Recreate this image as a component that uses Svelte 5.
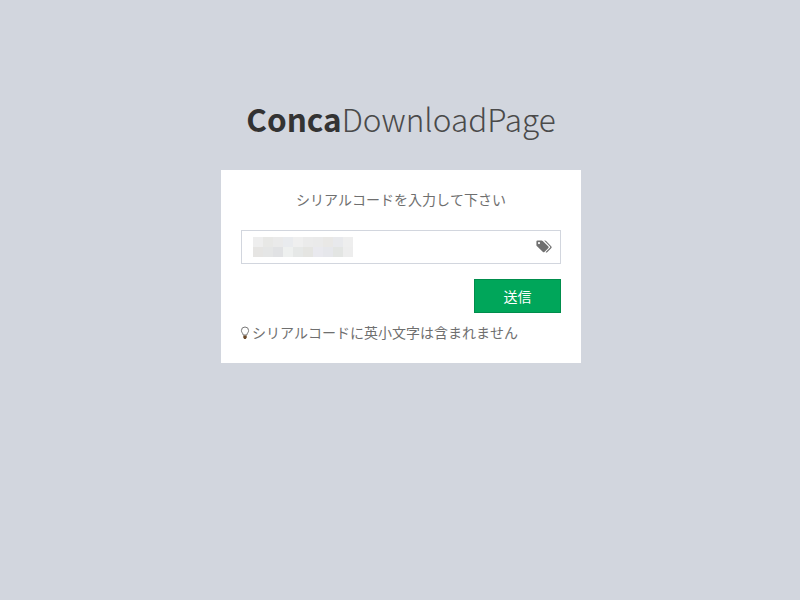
<script>
  const cells = [
    "#eeeeee", "#e8e8e6", "#eaeaea", "#e9ebee", "#efefef", "#ebebeb", "#eaeaea", "#e9e8e6", "#e8e9ec", "#eeeeee",
    "#e6e5e3", "#e5e6e6", "#e1e2e4", "#eef0ef", "#e6e8e7", "#e5e5e2", "#e9e9ee", "#e6e7eb", "#e3e5e3", "#ededed"
  ];
</script>

<div class="page">
  <h1 class="title"><b>Conca</b>DownloadPage</h1>

  <form class="card" onsubmit={(e) => e.preventDefault()}>
    <p class="lead">シリアルコードを入力して下さい</p>

    <div class="field">
      <div class="masked">
        {#each cells as c}
          <span style="background: {c}"></span>
        {/each}
      </div>
      <svg class="tag" viewBox="0 0 16 14" aria-hidden="true">
        <path d="M0.4 1.6 Q0.4 0.4 1.6 0.4 H5.6 Q6.2 0.4 6.7 0.9 L12.4 6.6 Q13 7.3 12.4 8 L8.4 12 Q7.7 12.6 7 12 L1 6.3 Q0.4 5.8 0.4 5.2 Z M3 2 A1.1 1.1 0 1 0 3 4.2 A1.1 1.1 0 1 0 3 2 Z" fill="#707070" fill-rule="evenodd"/>
        <path d="M8.2 0.4 H9 Q9.6 0.4 10.1 0.9 L15.4 6.4 Q16 7.2 15.4 8 L11.2 12.2 Q10.6 12.8 10 12.4 L9.7 12.1 L14 7.8 Q14.6 7.2 14 6.6 Z" fill="#707070"/>
      </svg>
    </div>

    <div class="actions">
      <button type="submit">送信</button>
    </div>

    <p class="hint">
      <svg class="bulb" viewBox="0 0 10 14" aria-hidden="true">
        <path d="M5 1 A3.6 3.6 0 0 0 1.4 4.6 C1.4 6.4 3 7.2 3.2 9 H6.8 C7 7.2 8.6 6.4 8.6 4.6 A3.6 3.6 0 0 0 5 1 Z" fill="none" stroke="#777" stroke-width="1"/>
        <path d="M3.3 9.6 H6.7 V11.6 L5.8 13 H4.2 L3.3 11.6 Z" fill="#6b4a2a"/>
      </svg>シリアルコードに英小文字は含まれません
    </p>
  </form>
</div>

<style>
  :global(body) {
    margin: 0;
    background: #d2d6de;
    font-family: "Noto Sans CJK JP", "Noto Sans", sans-serif;
    font-kerning: none;
    color: #6f6f6f;
  }

  .page {
    display: flex;
    flex-direction: column;
    align-items: center;
    height: 600px;
    padding: 100px 0 0 2px;
    box-sizing: border-box;
  }

  .title {
    margin: 0 0 25px;
    height: 45px;
    line-height: 36px;
    font-size: 31.5px;
    font-weight: 200;
    color: #4a4a4a;
    white-space: nowrap;
    font-kerning: normal;
  }

  .title b {
    font-weight: 700;
    color: #333;
  }

  .card {
    width: 360px;
    box-sizing: border-box;
    padding: 20px;
    background: #fff;
  }

  .lead {
    margin: 0 0 20px;
    height: 20px;
    line-height: 18px;
    font-size: 14px;
    text-align: center;
  }

  .field {
    display: flex;
    align-items: center;
    justify-content: space-between;
    height: 34px;
    box-sizing: border-box;
    padding: 0 8px 0 11px;
    border: 1px solid #d2d6de;
  }

  .masked {
    display: grid;
    grid-template-columns: repeat(10, 10px);
    grid-auto-rows: 10px;
  }

  .tag {
    width: 16px;
    height: 14px;
  }

  .actions {
    display: flex;
    justify-content: flex-end;
    margin-top: 15px;
  }

  button {
    width: 87px;
    height: 34px;
    padding: 0;
    border: 1px solid #008d4c;
    border-radius: 0;
    background: #00a65a;
    color: #fff;
    font: inherit;
    font-size: 14px;
  }

  .hint {
    margin: 10px 0 0;
    height: 20px;
    line-height: 18px;
    font-size: 14px;
    white-space: nowrap;
  }

  .bulb {
    width: 10px;
    height: 14px;
    vertical-align: -2px;
    margin: 0 2px 0 -1px;
  }
</style>
